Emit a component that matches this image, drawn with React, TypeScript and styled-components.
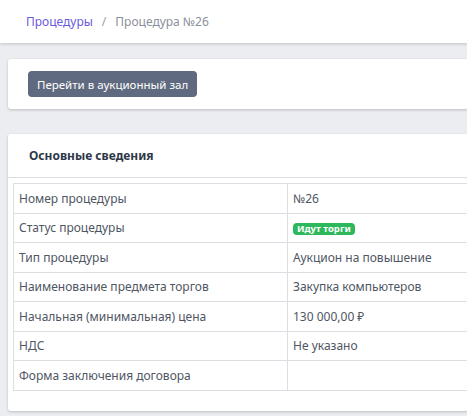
import * as React from "react";
import styled, { createGlobalStyle } from "styled-components";

const GlobalStyle = createGlobalStyle`
  html, body {
    margin: 0;
    padding: 0;
    background: #ebedf0;
    overflow: hidden;
    font-family: "Noto Sans", "Open Sans", sans-serif;
  }
`;

const Page = styled.div`
  width: 720px;
  min-height: 416px;
`;

const Header = styled.header`
  height: 43px;
  background: #ffffff;
  box-shadow: 0 1px 3px rgba(0, 0, 0, 0.18);
  display: flex;
  align-items: center;
  padding: 0 0 0 26px;
  font-size: 12px;
`;

const Crumb = styled.a<{ active?: boolean }>`
  color: ${(p) => (p.active ? "#8b909b" : "#6a5ae0")};
  text-decoration: none;
`;

const Sep = styled.span`
  color: #9aa0aa;
  margin: 0 9px;
`;

const Content = styled.main`
  padding: 16px 0 0 8px;
  display: flex;
  flex-direction: column;
  gap: 25px;
`;

const Card = styled.section`
  background: #ffffff;
  border-radius: 3px;
  box-shadow: 0 1px 3px rgba(0, 0, 0, 0.2);
`;

const ActionBar = styled.div`
  padding: 12px 20px;
`;

const Button = styled.button`
  height: 26px;
  padding: 0 9px;
  border: none;
  border-radius: 4px;
  background: #5f6a80;
  color: #ffffff;
  font-family: inherit;
  font-size: 11.5px;
  cursor: pointer;
`;

const CardTitle = styled.h2`
  margin: 0;
  height: 43px;
  display: flex;
  align-items: center;
  padding-left: 21px;
  font-size: 12px;
  font-weight: 700;
  color: #2e3748;
  border-bottom: 1px solid #dcdee3;
`;

const CardBody = styled.div`
  padding: 5px 0 20px 5px;
`;

const Table = styled.table`
  width: 100%;
  border-collapse: collapse;
  font-size: 12px;
  color: #4f5663;
`;

const Cell = styled.td<{ label?: boolean }>`
  height: 28.5px;
  padding: 0 5px;
  border: 1px solid #dcdee3;
  width: ${(p) => (p.label ? "263px" : "auto")};
  vertical-align: middle;
`;

const Badge = styled.span`
  display: inline-block;
  background: #2eb85c;
  color: #ffffff;
  font-size: 9.5px;
  font-weight: 700;
  line-height: 12px;
  padding: 0 4px;
  border-radius: 4px;
  vertical-align: middle;
`;

const rows: { label: string; value: React.ReactNode }[] = [
  { label: "Номер процедуры", value: "№26" },
  { label: "Статус процедуры", value: <Badge>Идут торги</Badge> },
  { label: "Тип процедуры", value: "Аукцион на повышение" },
  { label: "Наименование предмета торгов", value: "Закупка компьютеров" },
  { label: "Начальная (минимальная) цена", value: "130 000,00 ₽" },
  { label: "НДС", value: "Не указано" },
  { label: "Форма заключения договора", value: "" },
];

export default function App() {
  return (
    <Page>
      <GlobalStyle />
      <Header>
        <Crumb href="#">Процедуры</Crumb>
        <Sep>/</Sep>
        <Crumb active>Процедура №26</Crumb>
      </Header>
      <Content>
        <Card>
          <ActionBar>
            <Button>Перейти в аукционный зал</Button>
          </ActionBar>
        </Card>
        <Card>
          <CardTitle>Основные сведения</CardTitle>
          <CardBody>
            <Table>
              <tbody>
                {rows.map((r) => (
                  <tr key={r.label}>
                    <Cell label>{r.label}</Cell>
                    <Cell>{r.value}</Cell>
                  </tr>
                ))}
              </tbody>
            </Table>
          </CardBody>
        </Card>
      </Content>
    </Page>
  );
}
